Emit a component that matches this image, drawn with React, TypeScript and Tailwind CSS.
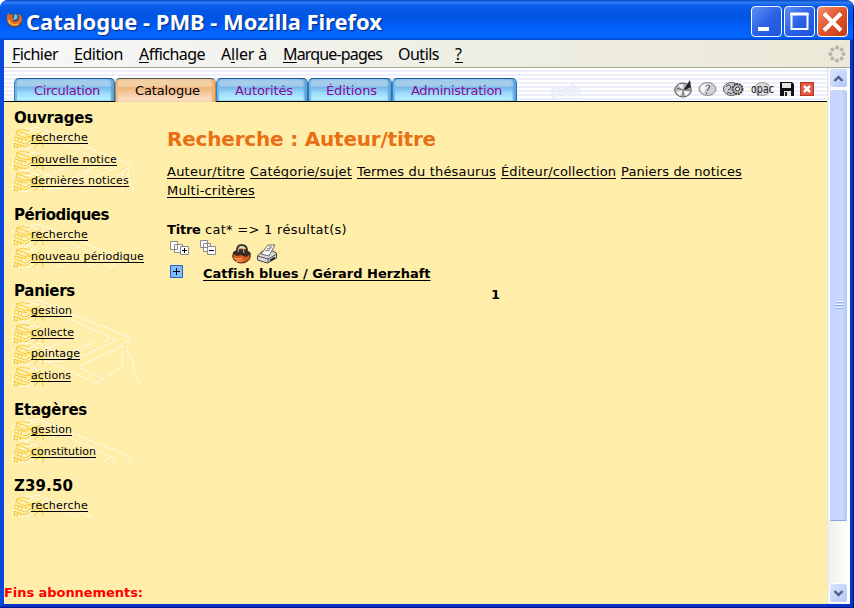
import { useLayoutEffect, useRef, type ReactNode } from "react";

/* Text tracked so that it fills a given advance width. */
function Fit({ w, className = "", children }: { w: number; className?: string; children: ReactNode }) {
  const ref = useRef<HTMLSpanElement>(null);
  useLayoutEffect(() => {
    const el = ref.current;
    if (!el) return;
    el.style.letterSpacing = "0px";
    const n = (el.textContent || "").length;
    const natural = el.getBoundingClientRect().width;
    el.style.letterSpacing = (w - natural) / n + "px";
  }, [w]);
  return (
    <span ref={ref} className={"inline-block whitespace-pre " + className}>
      {children}
    </span>
  );
}

const LINK = "underline decoration-1 underline-offset-2 [text-decoration-skip-ink:none]";

function Firefox() {
  return (
    <svg width="17" height="16" viewBox="0 0 16 16">
      <circle cx="8.5" cy="8" r="6.800" fill="#234f8c" />
      <path d="M8 2 L11 3 L10.500 7 L7 8z" fill="#6fc0e0" />
      <path d="M1 2 C2 1 3 1.500 4 3 L7 2.500 L5.500 5 L8 7 L6 8.500 C9 10.500 12 9 12.500 6 L12 1.500 C16 4 16.500 8 14.500 11 C11 16 4 16 1.500 11 C0 8 .2 5 1 2z" fill="#e0661a" />
      <path d="M2 8 C3 12 7 14 12 12" stroke="#f8b850" strokeWidth="1.500" fill="none" />
      <path d="M2 12 C5 16 12 16 15 10" stroke="#7a3210" strokeWidth="1" fill="none" />
    </svg>
  );
}

function WinButton({ red, children }: { red?: boolean; children: ReactNode }) {
  return (
    <div
      className={
        "h-[31px] w-[31px] rounded-[4px] border border-white bg-gradient-to-br " +
        (red ? "from-[#f0906c] via-[#e0532b] to-[#c83a10]" : "from-[#5f8ff5] via-[#2c62e6] to-[#1b55dd]")
      }
    >
      <svg width="29" height="29" viewBox="0 0 29 29">
        {children}
      </svg>
    </div>
  );
}

const MENU: [string, string, string, number, string][] = [
  ["", "F", "ichier", 46, "w-[62px]"],
  ["", "E", "dition", 49, "w-[65px]"],
  ["", "A", "ffichage", 66, "w-[82px]"],
  ["A", "l", "ler à", 46, "w-[62px]"],
  ["", "M", "arque-pages", 99, "w-[115px]"],
  ["Ou", "t", "ils", 41, "w-[57px]"],
  ["", "?", "", 8, "w-[20px]"],
];

const TABS: [string, number, string][] = [
  ["Circulation", 66, "w-[101px] pl-5"],
  ["Catalogue", 65, "w-[101px] pl-5"],
  ["Autorités", 58, "w-[92px] pl-[19px]"],
  ["Éditions", 51, "w-[84px] pl-[18px]"],
  ["Administration", 91, "w-[125px] pl-[19px]"],
];

const GROUPS: { title: string; w: number; items: [string, number][] }[] = [
  { title: "Ouvrages", w: 79, items: [["recherche", 57], ["nouvelle notice", 86], ["dernières notices", 98]] },
  { title: "Périodiques", w: 95, items: [["recherche", 57], ["nouveau périodique", 113]] },
  { title: "Paniers", w: 61, items: [["gestion", 41], ["collecte", 43], ["pointage", 49], ["actions", 40]] },
  { title: "Etagères", w: 73, items: [["gestion", 41], ["constitution", 65]] },
  { title: "Z39.50", w: 59, items: [["recherche", 57]] },
];

const CRITERIA: [string, number][] = [
  ["Auteur/titre", 78],
  ["Catégorie/sujet", 102],
  ["Termes du thésaurus", 139],
  ["Éditeur/collection", 115],
  ["Paniers de notices", 121],
  ["Multi-critères", 88],
];

/* Small stack of golden books behind each link. */
function Books() {
  return (
    <svg className="absolute left-0 top-0" width="34" height="22" viewBox="0 0 34 22" fill="none">
      <path d="M0 8 L9 2 L16 1 M0 21 L2 12 M9 8 L22 3 L30 8 M2 12 L16 16 M18 20 L21 12 M6 21 L18 21" stroke="#fffdf0" />
      <path d="M4 4 L11 2 L18 4 M3 7 L14 11 L29 6 M4 7 L5 4 L17 8 M3 10 L15 13 M15 9 L21 12 M20 12 L31 9 M2 13 L13 17 L19 14 M1 16 L13 20 L19 17 M1 20 L6 21" stroke="#f6cd3a" />
      <path d="M4 10 L2 13 M7 11 L6 14 M10 12 L9 15 M3 16 L2 20 M6 17 L5 21 M9 18 L8 21 M20 12 L20 15 L30 13 M30 10 L31 21 M22 21 L30 13" stroke="#f3c830" />
    </svg>
  );
}

/* Faint white line drawing of a large open book, cut off at the list's height. */
function Sketch({ h }: { h: number }) {
  return (
    <svg className="absolute left-2 top-0" width="133" height={h} viewBox={"0 0 133 " + h} fill="none" stroke="#fffdf2" strokeDasharray="3 1" shapeRendering="crispEdges">
      <path d="M14 3 L26 0 L119 38" />
      <path d="M30 6 L104 40 L62 60 L14 38" />
      <path d="M98 38 L91 43 M82 40 L46 58 L26 52 L60 38" />
      <path d="M78 44 L50 62 L28 62 M117 42 L115 52 L122 62 L120 66 L126 80 L132 86" />
      <path d="M119 38 L110 46 L68 66 M110 46 L111 66 L80 86 M66 66 L92 80 M36 62 L88 84" />
    </svg>
  );
}

function ScrollButton({ d }: { d: string }) {
  return (
    <div className="flex h-5 w-[19px] items-center justify-center rounded-[3px] border border-white bg-gradient-to-br from-[#dbe6fe] to-[#b4c8f8]">
      <svg width="11" height="9" viewBox="0 0 11 9" fill="none" stroke="#4d6185" strokeWidth="2.400">
        <path d={d} />
      </svg>
    </div>
  );
}

function Toolbar() {
  return (
    <svg className="ml-auto mr-[13px] mt-[10px] shrink-0" width="142" height="22" viewBox="672 78 142 22">
      <ellipse cx="683" cy="90" rx="8.300" ry="7" fill="#b9b9b9" stroke="#555" />
      <path d="M683 90L678 85L683 84z M683 90L676 92L680 96z M683 90L690 92L686 96z" fill="#f4f4f4" />
      <path d="M683 90v6M677 88l6 2M683 90h7" stroke="#666" />
      <path d="M684 89 L690 80 L691 87 L685 90z" fill="#222" />
      <ellipse cx="707.500" cy="89" rx="8.500" ry="6.500" fill="#cfcfcf" stroke="#888" />
      <path d="M700 88 Q703 83 710 84 L703 93z" fill="#f8f8f8" />
      <path d="M705.500 86.500 Q708 83.500 709.500 86 Q710 88 707.500 90 L707 91 M706.500 92.500v1.500" stroke="#444" fill="none" />
      <ellipse cx="731.500" cy="89" rx="8" ry="6.500" fill="#cfcfcf" stroke="#555" />
      <path d="M726 87q3-4 5 0q-1 3-3 3M727 92l5 2" stroke="#444" fill="none" />
      <circle cx="737.500" cy="89" r="5" fill="#bbb" stroke="#444" strokeWidth="2" strokeDasharray="2 .7" />
      <circle cx="737.500" cy="89" r="2" fill="#eee" stroke="#333" />
      <ellipse cx="762.500" cy="89" rx="8" ry="6.500" fill="#dcdcdc" stroke="#999" />
      <text x="751" y="93" fontFamily="DejaVu Sans" fontSize="11.500" textLength="23" lengthAdjust="spacingAndGlyphs" fill="#222">opac</text>
      <path d="M780 82h12l2 2v12h-14z" fill="#111" />
      <path d="M782 83h9v5h-9z M784 91h7v5h-7z" fill="#e4e4e4" />
      <path d="M785 92h2v4h-2z" fill="#222" />
      <rect x="800.500" y="82.500" width="13" height="13" fill="#e05a42" stroke="#b83420" />
      <path d="M804 86l6 6M810 86l-6 6" stroke="#fff" strokeWidth="2.500" />
    </svg>
  );
}

function ListTools() {
  return (
    <svg className="block" width="112" height="25" viewBox="167 239 112 25">
      <g fill="#fff" stroke="#8a8a8a">
        <path d="M170.500 241.500h7v8h-7zM174.500 244.500h8v8h-8z" />
        <path d="M200.500 240.500h7v7h-7zM203.500 243.500h7v8h-7z" />
        <path d="M180.500 246.500h8v8h-8z" />
        <path d="M207.500 246.500h8v8h-8z" />
      </g>
      <path d="M182 250.500h5M184.500 248v5M209 250.500h5" stroke="#000" />
      <path d="M237 251q0-6 4.500-6q5.500 0 5.500 6" stroke="#333" strokeWidth="2" fill="none" />
      <ellipse cx="241.500" cy="256" rx="8.800" ry="7" fill="#d65c1c" stroke="#442010" />
      <path d="M233 252q8-5 17 0l1 2l-5 3l-5-2-4 1-4-2z" fill="#3b2c20" />
      <path d="M234 258q4 2 8 0M236 261q4 1 7-1" stroke="#f79a5a" strokeWidth="1.500" fill="none" />
      <path d="M238 252q1-6 3-6t3 7" stroke="#b8b8b8" fill="none" />
      <path d="M257.500 256l5-5h10l4 2v5l-9 5-10-3z" fill="#d8d8d8" stroke="#444" />
      <path d="M261 254l7-9h7l-6 11z" fill="#fff" stroke="#666" />
      <path d="M267 249l4-1M265 251l5-1M269 247l3 0" stroke="#777" />
      <path d="M258 256l10 3 9-5M268 259v4" stroke="#555" fill="none" />
      <path d="M270 260.500l5-3" stroke="#222" strokeWidth="2" />
    </svg>
  );
}

export default function App() {
  return (
    <div className="flex h-[608px] w-[854px] flex-col overflow-hidden rounded-t-[8px] border-b border-r border-[#00138c] bg-[#0847dc] font-['DejaVu_Sans',sans-serif] text-black">
      <header className="flex h-10 shrink-0 items-center rounded-t-[7px] bg-[linear-gradient(#0a46c8_0,#2b7df5_6%,#0a5ce8_14%,#0054e3_45%,#0060fb_72%,#0468ff_92%,#0046cc_100%)] pl-[6px] pr-[5px]">
        <Firefox />
        <Fit w={356} className="ml-[3px] mt-0.5 font-['Noto_Sans',sans-serif] text-[22px] font-bold leading-8 text-white [text-shadow:1px_1px_1px_#0a2a80]">
          Catalogue - PMB - Mozilla Firefox
        </Fit>
        <div className="ml-auto mt-[3px] flex gap-[2px]">
          <WinButton><path d="M6 20h11v4H6z" fill="#fff" /></WinButton>
          <WinButton><path d="M6.500 7h16v15h-16z" fill="none" stroke="#fff" strokeWidth="2" /><path d="M5.500 5.500h18v3h-18z" fill="#fff" /></WinButton>
          <WinButton red><path d="M6 6.500l17 17M23 6.500l-17 17" stroke="#fff" strokeWidth="4" /></WinButton>
        </div>
      </header>

      <div className="flex min-h-0 flex-1 flex-col border-b-[3px] border-l-4 border-r-[3px] border-b-[#0733c4] border-l-[#0a48dd] border-r-[#0733c4]">
        <nav className="flex h-7 shrink-0 items-center border-b border-[#a9a793] bg-[linear-gradient(100deg,#f6f7f7,#efefe6_50%,#ebe8d6)] pl-2 font-['Noto_Sans',sans-serif] text-[16px]">
          {MENU.map(([a, u, b, w, cell]) => (
            <div key={a + u + b} className={"shrink-0 leading-7 " + cell}>
              <Fit w={w}>
                {a}<span className={LINK}>{u}</span>{b}
              </Fit>
            </div>
          ))}
          <svg className="ml-auto mr-1" width="18" height="18" viewBox="0 0 18 18" fill="#b5b5b0">
            <circle cx="9" cy="2.500" r="2" /><circle cx="13.600" cy="4.400" r="2" /><circle cx="15.500" cy="9" r="2" /><circle cx="13.600" cy="13.600" r="2" />
            <circle cx="9" cy="15.500" r="2" /><circle cx="4.400" cy="13.600" r="2" /><circle cx="2.500" cy="9" r="2" /><circle cx="4.400" cy="4.400" r="2" />
          </svg>
        </nav>

        <div className="flex min-h-0 flex-1">
          <div className="flex min-w-0 flex-1 flex-col bg-[#ffeeaa]">
            <div className="flex h-[34px] shrink-0 border-b border-black bg-[repeating-linear-gradient(#ffffff_0_2px,#eeeefc_2px_4px)] pl-[10px]">
              <div className="mt-[10px] flex h-[23px]">
                {TABS.map(([t, w, cell], i) => (
                  <div
                    key={t}
                    className={
                      "shrink-0 rounded-t-[5px] border-x border-t text-[13px] leading-[24px] " + cell +
                      (i === 1
                        ? " h-6 border-[#3f5c50] border-l-[#c9863f] border-r-[#c9863f] bg-[linear-gradient(#f3cfa4_0_30%,#eeb47a_38%,#f8d5b0_75%,#fbe0c6)] shadow-[inset_2px_0_1px_#efb98a,inset_-3px_0_2px_#efb070]"
                        : " h-full border-[#1b5692] border-l-[#2f80c0] border-r-[#2a70b0] bg-[linear-gradient(#a3cdeb_0_30%,#76b7ec_38%,#9cdcfb_65%,#bdf5ff)] text-[#8a0a96] shadow-[inset_2px_0_1px_#74b4e6,inset_-3px_0_2px_#5fa4dc]")
                    }
                  >
                    <Fit w={w} className="-ml-px">{t}</Fit>
                  </div>
                ))}
              </div>
              <div className="ml-[34px] mt-[14px] h-5 text-[16px] leading-[17px] text-[#f4f7fe] [text-shadow:0_0_1px_#c4d2ea,0_0_2px_#dde6f6]">pɘb</div>
              <Toolbar />
            </div>

            <div className="flex min-h-0 flex-1">
              <aside className="flex w-[163px] shrink-0 flex-col pt-[6px]">
                {GROUPS.map((g) => (
                  <section key={g.title} className="mb-[13.6px]">
                    <h2 className="h-[19px] pl-[10px] text-[15px] font-bold leading-[21px]">
                      <Fit w={g.w}>{g.title}</Fit>
                    </h2>
                    <ul className="relative">
                      <Sketch h={g.items.length * 21.6} />
                      {g.items.map(([t, w]) => (
                        <li key={t} className="relative ml-2 h-[21.6px] pl-[19px] text-[11px] leading-[21.6px]">
                          <Books />
                          <Fit w={w} className={"relative " + LINK}>{t}</Fit>
                        </li>
                      ))}
                    </ul>
                  </section>
                ))}
                <p className="mb-px mt-auto h-5 text-[13px] font-bold leading-5 text-[#ff0000]">
                  <Fit w={139}>Fins abonnements:</Fit>
                </p>
              </aside>

              <main className="flex-1 pt-[25px] text-[13px] leading-[19px]">
                <h1 className="h-6 text-[20px] font-bold leading-6 text-[#e86f14]">
                  <Fit w={269}>Recherche : Auteur/titre</Fit>
                </h1>
                <div className="mt-[11px] flex w-[600px] flex-wrap gap-x-[5px]">
                  {CRITERIA.map(([t, w]) => (
                    <Fit key={t} w={w} className={LINK}>{t}</Fit>
                  ))}
                </div>
                <p className="mt-5 h-[19px]">
                  <Fit w={38} className="font-bold">Titre </Fit>
                  <Fit w={142}>cat* =&gt; 1 résultat(s)</Fit>
                </p>
                <ListTools />
                <div className="flex h-[18px] items-center pl-[3px]">
                  <svg className="-mt-[3px]" width="13" height="13" viewBox="0 0 13 13">
                    <path d="M.5.5h12v12H.500z" fill="#7fbcff" stroke="#1f62b8" />
                    <path d="M3 6.500h7M6.500 3v7" stroke="#000" />
                  </svg>
                  <Fit w={227} className={"ml-5 font-bold " + LINK}>Catfish blues / Gérard Herzhaft</Fit>
                </div>
                <p className="mt-[3px] pr-[3px] text-center font-bold">1</p>
              </main>
            </div>
          </div>

          <div className="flex w-[23px] shrink-0 flex-col border-l border-[#e8e8e0] bg-[linear-gradient(90deg,#f1f0ec,#fefefc)] pl-px">
            <ScrollButton d="M1.500 7L5.500 3L9.500 7" />
            <div className="mt-px flex h-[432px] w-[19px] flex-col items-center justify-center gap-px rounded-[3px] border border-white border-b-[#8aa6e6] bg-[linear-gradient(90deg,#c4d4fd,#c8d8fe_70%,#b4c8f6)]">
              <i className="h-px w-2 bg-[#8cb0f8] shadow-[0_-1px_#eef4fe]" />
              <i className="mt-px h-px w-2 bg-[#8cb0f8] shadow-[0_-1px_#eef4fe]" />
              <i className="mt-px h-px w-2 bg-[#8cb0f8] shadow-[0_-1px_#eef4fe]" />
            </div>
            <div className="mb-px mt-auto"><ScrollButton d="M1.500 2L5.500 6L9.500 2" /></div>
          </div>
        </div>
      </div>
    </div>
  );
}
